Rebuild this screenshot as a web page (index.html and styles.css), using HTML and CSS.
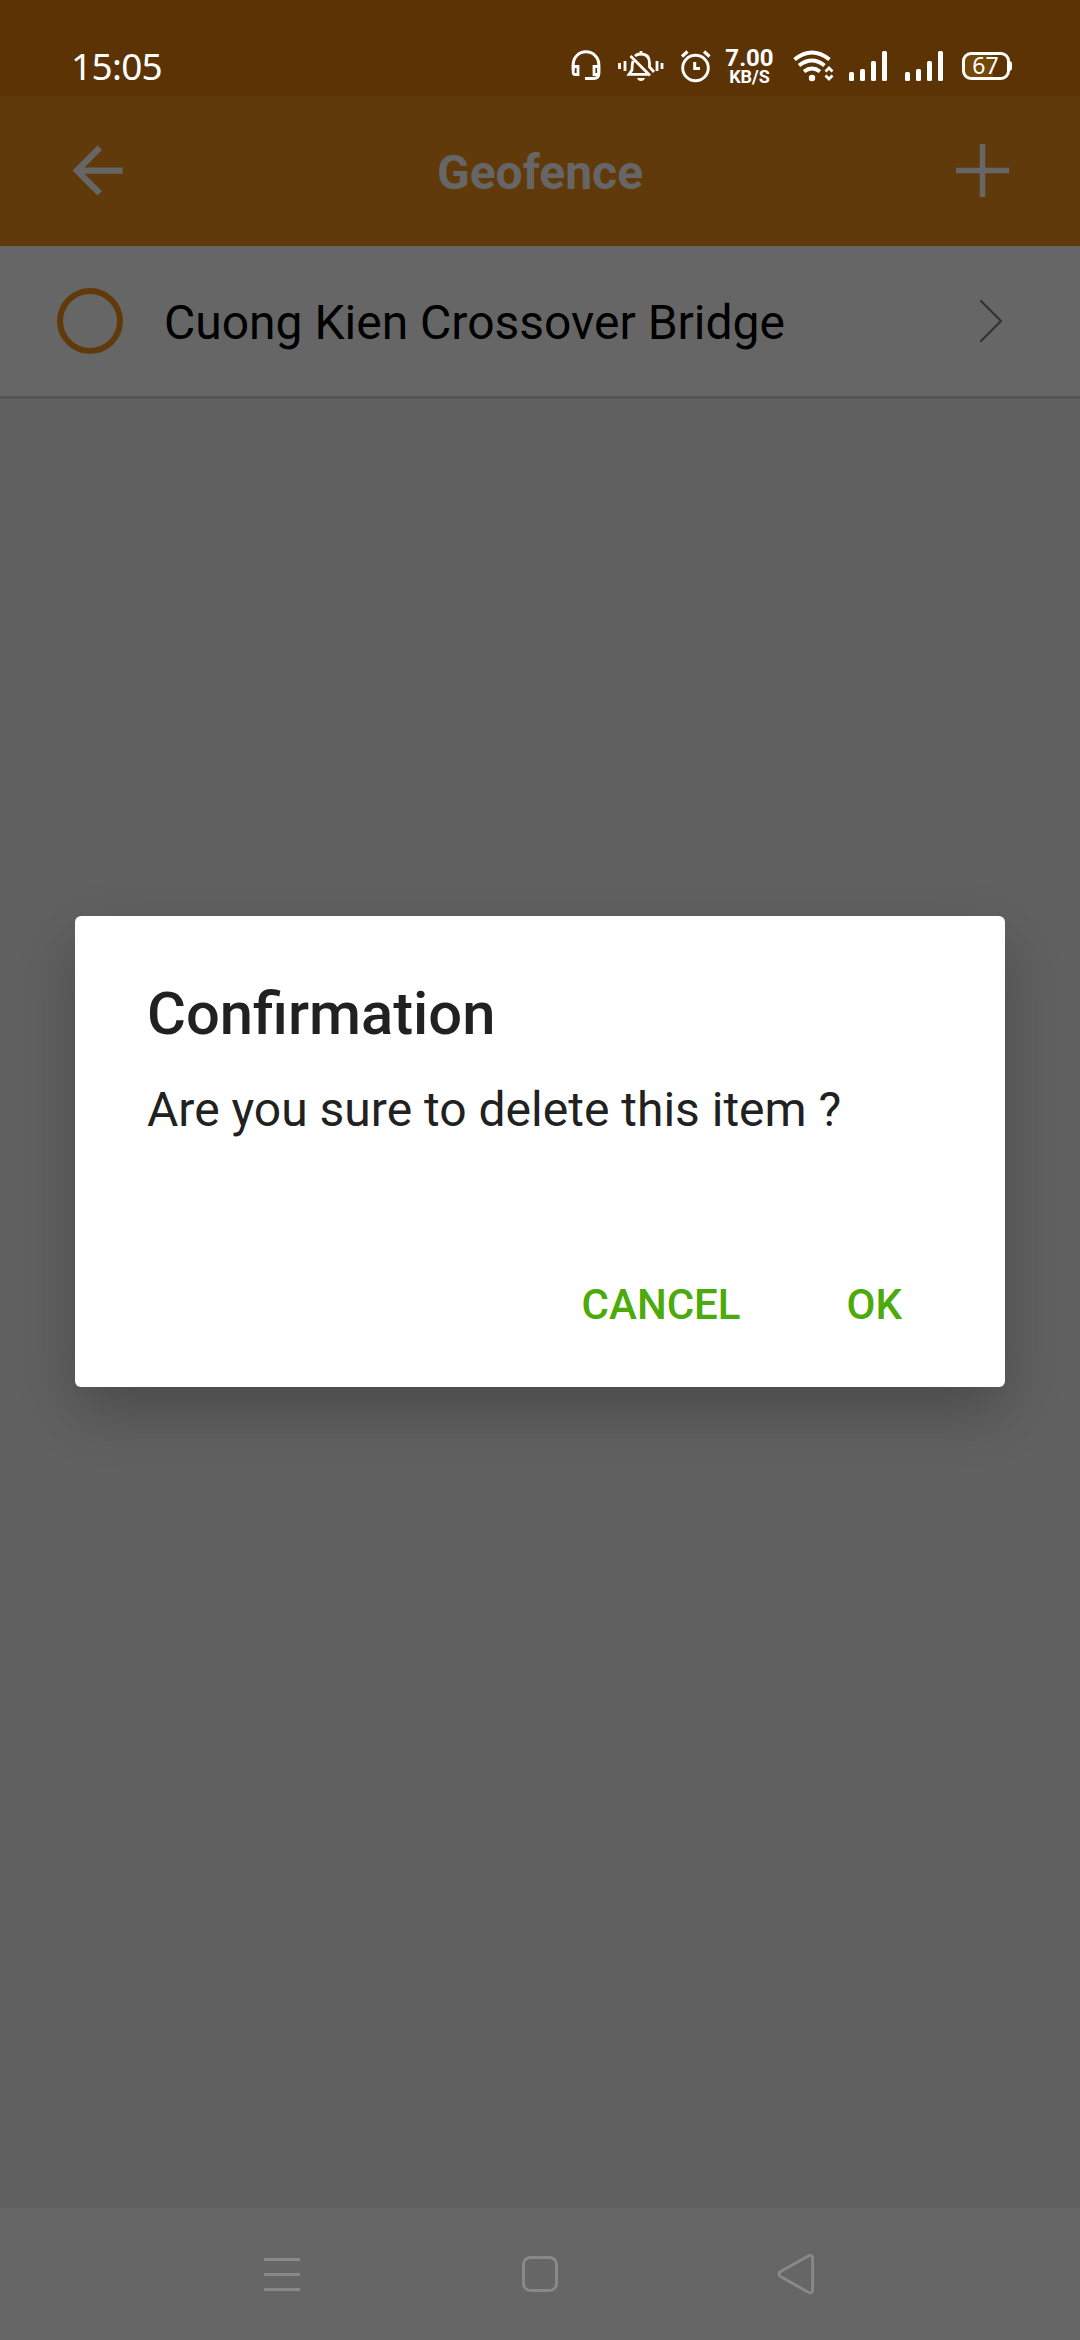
FILE: index.html
```
<!DOCTYPE html>
<html lang="en">
<head>
<meta charset="utf-8">
<title>Geofence</title>
<link rel="stylesheet" href="styles.css">
</head>
<body>
<div class="screen">
  <header class="status-bar">
    <span class="clock">15:05</span>
    <div class="indicators">
      <svg class="headset" width="30" height="32" viewBox="0 0 30 32" fill="none" stroke="#fff">
        <path d="M2.2 20V14.5a12.8 12.8 0 0 1 25.6 0V23.500q0 5-5 5H14" stroke-width="3"/>
        <path d="M2.200 16.500H7V24.500H4.200Q2.200 24.500 2.200 22.500ZM27.800 16.500H23V24.500H25.800Q27.800 24.500 27.800 22.500Z" stroke-width="2.800"/>
      </svg>
      <svg class="bell" width="46" height="32" viewBox="0 0 46 32" fill="none" stroke="#fff">
        <path d="M1.500 13v6M7 11v10M39 11v10M44 13v6" stroke-width="2.800"/>
        <path d="M15 11Q14 14 14 20L11 24.300H30M17 6Q19 4 23 4Q31.500 4 31.500 13V17L36 22M23 1V4M12.500 6L32 25.500" stroke-width="2.800"/>
        <path d="M19 28h8q-1 3-4 3t-4-3Z" fill="#fff" stroke="none"/>
      </svg>
      <svg class="alarm" width="30" height="32" viewBox="0 0 30 32" fill="none" stroke="#fff">
        <circle cx="14.500" cy="18" r="12.800" stroke-width="2.900"/>
        <path d="M1 6.500L6.500 1.500M28.500 6.500L23 1.500" stroke-width="3.200"/>
        <path d="M13.700 12V18.500H19" stroke-width="3"/>
      </svg>
      <div class="speed"><b class="speed-value">7.00</b><b class="speed-unit">KB/S</b></div>
      <svg class="wifi" width="40" height="32" viewBox="0 0 40 32" fill="none" stroke="#fff">
        <path d="M0.500 9.500Q18 -4.500 35.500 9.500M5 15.500Q18 5.500 30.500 15.500M10 21.500Q18 15.500 26 21.500" stroke-width="3.800"/>
        <circle cx="18" cy="28" r="3.200" fill="#fff" stroke="none"/>
        <path d="M31.500 21.500L35 18L38.500 21.500M31.500 25.500L35 29L38.500 25.500" stroke-width="2.800"/>
      </svg>
      <svg class="signal" width="39" height="31" viewBox="0 0 39 31" fill="#fff">
        <rect x="0" y="22" width="5" height="9" rx="1.500"/><rect x="11" y="19" width="5" height="12" rx="1.500"/><rect x="22" y="11" width="5" height="20" rx="1.500"/><rect x="33" y="1" width="5" height="30" rx="1.500"/>
      </svg>
      <svg class="signal signal-two" width="39" height="31" viewBox="0 0 39 31" fill="#fff">
        <rect x="0" y="22" width="5" height="9" rx="1.500"/><rect x="11" y="19" width="5" height="12" rx="1.500"/><rect x="22" y="11" width="5" height="20" rx="1.500"/><rect x="33" y="1" width="5" height="30" rx="1.500"/>
      </svg>
      <div class="battery">67</div>
    </div>
  </header>

  <nav class="app-bar">
    <svg width="75" height="75" viewBox="0 0 24 24" fill="#666"><path d="M20 11H7.830l5.590-5.590L12 4l-8 8 8 8 1.410-1.410L7.830 13H20v-2z"/></svg>
    <h1 class="app-title">Geofence</h1>
    <svg class="add" width="53" height="53" viewBox="0 0 53 53" stroke="#666" stroke-width="5.500"><path d="M0 26.500H53M26.500 0V53"/></svg>
  </nav>

  <main class="content">
    <div class="fence-row">
      <span class="radio"></span>
      <span class="fence-name">Cuong Kien Crossover Bridge</span>
      <svg width="24" height="44" viewBox="0 0 24 44" fill="none" stroke="#333" stroke-width="2.200" stroke-linecap="round" stroke-linejoin="round"><path d="M2 2L22 22L2 42"/></svg>
    </div>
  </main>

  <footer class="nav-bar">
    <svg width="40" height="44" viewBox="0 0 40 44" stroke="#898989" stroke-width="3"><path d="M2 6.500H38M2 21.500H38M2 36.500H38"/></svg>
    <svg width="40" height="44" viewBox="0 0 40 44" fill="none" stroke="#898989" stroke-width="3"><rect x="3.500" y="4.500" width="33" height="33" rx="7"/></svg>
    <svg width="40" height="44" viewBox="0 0 40 44" fill="none" stroke="#898989" stroke-width="2.800"><path d="M30.700 2.700L2 18.800Q0 21 2 23.200L30.700 39.500Q34.600 40.800 34.600 37.300V5Q34.600 1.500 30.700 2.700Z"/></svg>
  </footer>

  <div class="overlay">
    <section class="dialog">
      <h2 class="dialog-title">Confirmation</h2>
      <p class="dialog-message">Are you sure to delete this item ?</p>
      <div class="dialog-actions"><span>CANCEL</span><span>OK</span></div>
    </section>
  </div>
</div>
</body>
</html>
```
FILE: styles.css
```
* { box-sizing: border-box; }
body { margin: 0; font-family: Roboto, sans-serif; }
svg { display: block; flex: none; overflow: visible; }
h1, h2, p { margin: 0; }

.screen {
  position: relative;
  width: 1080px;
  height: 2340px;
  display: flex;
  flex-direction: column;
  overflow: hidden;
  background: #616161;
}

.status-bar {
  height: 96px;
  padding: 50px 70.500px 0 71px;
  display: flex;
  justify-content: space-between;
  background: #5c3305;
  color: #fff;
}
.clock {
  font: 37px/31px "Noto Sans", sans-serif;
  letter-spacing: -0.700px;
}
.indicators { display: flex; height: 32px; }
.bell { margin-left: 17px; }
.alarm { margin-left: 17px; }
.speed {
  width: 50px;
  margin-left: 14px;
  display: flex;
  flex-direction: column;
  align-items: center;
}
.speed-value { font-size: 24px; line-height: 16px; }
.speed-unit { font-size: 18px; line-height: 21px; }
.wifi { margin-left: 19px; }
.signal { margin-left: 15px; }
.signal-two { margin-left: 17px; }
.battery {
  position: relative;
  width: 48px;
  height: 28px;
  margin: 2px 0 0 18px;
  border: 3px solid #fff;
  border-radius: 9px;
  background: linear-gradient(90deg, #734808 67%, transparent 67%);
  font: 23px/21px "Noto Sans", sans-serif;
  text-align: center;
}
.battery::after {
  content: "";
  position: absolute;
  right: -5px;
  top: 6px;
  width: 3px;
  height: 10px;
  border-radius: 0 3px 3px 0;
  background: #fff;
}

.app-bar {
  height: 150px;
  padding: 0 71px 1px 60px;
  display: flex;
  align-items: center;
  justify-content: space-between;
  background: #613a0b;
}
.app-title {
  flex: 1;
  padding-top: 3px;
  margin-right: 11px;
  color: #666;
  font-size: 48px;
  font-weight: 700;
  text-align: center;
}

.content { flex: 1; }
.fence-row {
  height: 153px;
  padding: 0 77px 0 57px;
  display: flex;
  align-items: center;
  border-bottom: 3px solid #555;
  background: #666;
}
.radio {
  width: 66px;
  height: 66px;
  border: 6px solid #613a0b;
  border-radius: 50%;
}
.fence-name {
  flex: 1;
  margin-left: 41px;
  padding-top: 2px;
  font-size: 48px;
  color: #000;
}

.nav-bar {
  height: 132px;
  padding: 2px 262px 0;
  display: flex;
  align-items: center;
  justify-content: space-between;
  background: #666;
}

.overlay {
  position: absolute;
  inset: 0;
  padding: 916px 75px 0;
}
.dialog {
  height: 471px;
  padding: 63px 72px 0;
  border-radius: 6px;
  background: #fff;
  color: #212121;
  box-shadow: 0 24px 60px rgba(0, 0, 0, 0.240);
}
.dialog-title { font-size: 59.700px; font-weight: 500; line-height: 70px; }
.dialog-message { margin-top: 33px; font-size: 48px; line-height: 56px; }
.dialog-actions {
  margin-top: 142px;
  padding-right: 31px;
  display: flex;
  justify-content: flex-end;
  gap: 106px;
  color: #4caa0a;
  font-size: 42px;
  font-weight: 500;
  line-height: 50px;
}
```
